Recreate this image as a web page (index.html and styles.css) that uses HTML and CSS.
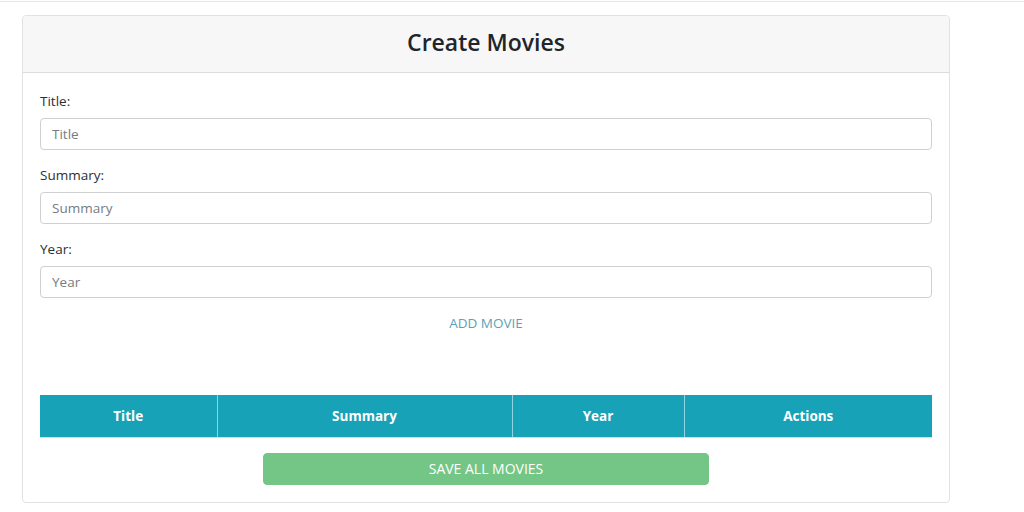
FILE: index.html
```html
<!DOCTYPE html>
<html lang="en">
<head>
    <meta charset="UTF-8">
    <meta name="viewport" content="width=device-width, initial-scale=1.0">
    <title>Create Movies</title>
    <link rel="stylesheet" href="styles.css">
</head>
<body>
    <div class="topbar"></div>
    <div class="page">
        <div class="card">
            <div class="card-header">
                <h2>Create Movies</h2>
            </div>
            <div class="card-body">
                <form id="movieForm">
                    <div class="form-group">
                        <label for="title">Title:</label>
                        <input type="text" id="title" placeholder="Title">
                    </div>
                    <div class="form-group">
                        <label for="summary">Summary:</label>
                        <input type="text" id="summary" placeholder="Summary">
                    </div>
                    <div class="form-group">
                        <label for="year">Year:</label>
                        <input type="text" id="year" placeholder="Year">
                    </div>
                    <div class="add-row">
                        <button type="button" class="btn btn-link" disabled>Add Movie</button>
                    </div>
                </form>

                <table class="movies">
                    <thead>
                        <tr>
                            <th class="col-title">Title</th>
                            <th class="col-summary">Summary</th>
                            <th class="col-year">Year</th>
                            <th class="col-actions">Actions</th>
                        </tr>
                    </thead>
                    <tbody></tbody>
                </table>

                <div class="save-row">
                    <button type="button" class="btn btn-success" disabled>Save All Movies</button>
                </div>
            </div>
        </div>
    </div>
</body>
</html>
```

FILE: styles.css
```css
body {
    margin: 0;
    font-family: "Open Sans", "Noto Sans", sans-serif;
    color: #212529;
    background: #fff;
}

.topbar {
    height: 1px;
    border-bottom: 1px solid #e6e6e6;
}

.page {
    padding: 13px 0 0 22px;
}

.card {
    width: 926px;
    border: 1px solid #e2e2e2;
    border-radius: 4px;
    background: white;
}

.card-header {
    height: 56px;
    background-color: #f7f7f7;
    border-bottom: 1px solid #dcdcdc;
    display: flex;
    align-items: center;
    justify-content: center;
    border-radius: 4px 4px 0 0;
}

.card-header h2 {
    margin: 0;
    font-size: 23px;
    font-weight: 600;
    color: #212529;
    padding-bottom: 5px;
}

.card-body {
    padding: 16px 17px 17px 17px;
}

.form-group {
    display: flex;
    flex-direction: column;
    margin-bottom: 13px;
}

.form-group label {
    font-size: 13.5px;
    line-height: 24px;
    margin-bottom: 5px;
    color: #2b2f33;
}

.form-group input {
    height: 32px;
    box-sizing: border-box;
    padding: 4px 11px;
    border: 1px solid #d0d0d0;
    border-radius: 4px;
    font-family: inherit;
    font-size: 13.5px;
    color: #495057;
}

.form-group input::placeholder {
    color: #757c83;
}

.add-row {
    display: flex;
    justify-content: center;
    margin-top: -4px;
}

.btn {
    font-family: inherit;
    text-transform: uppercase;
    border: 1px solid transparent;
    border-radius: 4px;
    height: 32px;
    font-size: 13.5px;
    cursor: pointer;
}

.btn-link {
    background: none;
    color: #5aa3b6;
    padding: 0 12px;
}

.movies {
    width: 100%;
    margin-top: 56px;
    border-collapse: collapse;
}

.movies th {
    height: 42px;
    box-sizing: border-box;
    background-color: #17a2b8;
    color: white;
    font-size: 13.5px;
    font-weight: 700;
    border-left: 1px solid #8fd4df;
    border-bottom: 1px solid #bfe6ec;
    padding: 0;
}

.movies th:first-child {
    border-left: none;
}

.col-title { width: 177px; }
.col-summary { width: 295px; }
.col-year { width: 172px; }

.save-row {
    display: flex;
    justify-content: center;
    margin-top: 15px;
}

.btn-success {
    width: 50%;
    background-color: #73c686;
    border-color: #73c686;
    color: #ffffff;
    font-size: 14px;
}
```
